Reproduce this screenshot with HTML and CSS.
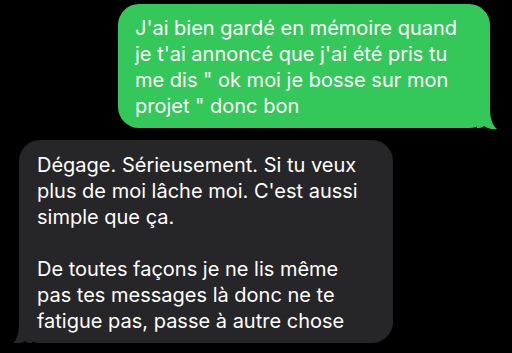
FILE: index.html
```html
<!DOCTYPE html>
<html lang="fr">
<head>
    <meta charset="UTF-8">
    <meta name="viewport" content="width=device-width, initial-scale=1.0">
    <title>Messages</title>
    <link rel="stylesheet" href="styles.css">
</head>
<body>
    <div class="thread">
        <div class="bubble sent">
            J'ai bien gardé en mémoire quand je t'ai annoncé que j'ai été pris tu me dis " ok moi je bosse sur mon projet " donc bon
            <svg class="tail" width="20" height="22" viewBox="0 0 20 22">
                <path d="M0 0 H13 C13 10 15 17 20 21 C15 22 10 20 7 18 C5 20 2 20 0 20 Z" fill="#34c759"/>
            </svg>
        </div>
        <div class="bubble received">
            <p>Dégage. Sérieusement. Si tu veux plus de moi lâche moi. C'est aussi simple que ça.</p>
            <p>De toutes façons je ne lis même pas tes messages là donc ne te fatigue pas, passe à autre chose</p>
            <svg class="tail" width="20" height="22" viewBox="0 0 20 22">
                <path d="M20 0 H7 C7 10 5 17 0 21 C5 22 10 20 13 18 C15 20 18 20 20 20 Z" fill="#262629"/>
            </svg>
        </div>
    </div>
</body>
</html>
```

FILE: styles.css
```css
body {
    margin: 0;
    background-color: #000;
    font-family: Inter, "Liberation Sans", sans-serif;
    color: #fff;
}

.thread {
    display: flex;
    flex-direction: column;
    padding: 4px 22px 0 19px;
    gap: 12px;
}

.bubble {
    position: relative;
    font-size: 20px;
    line-height: 26px;
    border-radius: 21px;
    box-sizing: border-box;
}

.bubble p {
    margin: 0;
}

.bubble p + p {
    margin-top: 26px;
}

.sent {
    align-self: flex-end;
    width: 372px;
    background-color: #34c759;
    padding: 11px 16px 9px 17px;
}

.received {
    align-self: flex-start;
    width: 374px;
    background-color: #262629;
    padding: 12px 16px 9px 18px;
}

.tail {
    position: absolute;
    bottom: -2px;
}

.sent .tail {
    right: -7px;
}

.received .tail {
    left: -7px;
}
```
